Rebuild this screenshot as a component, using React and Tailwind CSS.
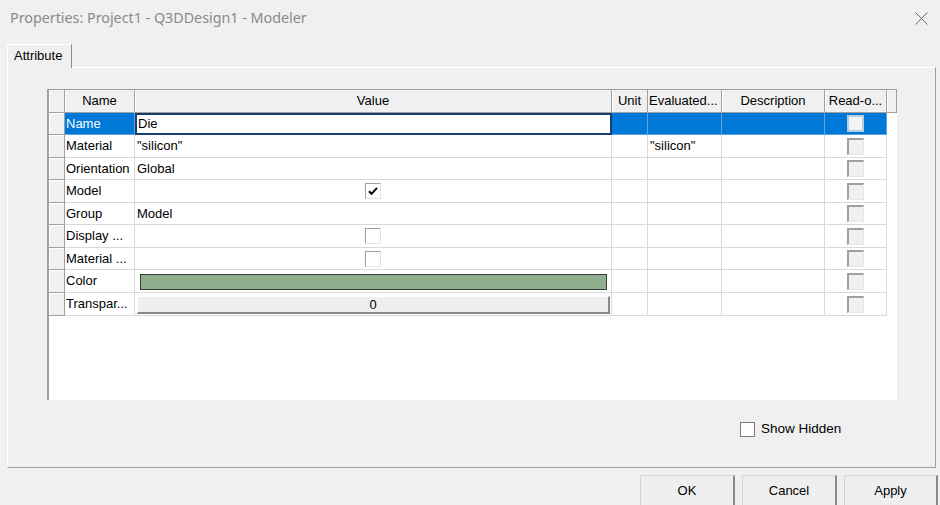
import React from 'react';

// Rejilla de propiedades del objeto "Die" — filas en el orden del diálogo original.
const FILAS = [
  { nombre: 'Name', valor: 'Die', evaluado: '', tipo: 'edit', alto: 'h-[22px]' },
  { nombre: 'Material', valor: '"silicon"', evaluado: '"silicon"', tipo: 'texto', alto: 'h-[23px]' },
  { nombre: 'Orientation', valor: 'Global', evaluado: '', tipo: 'texto', alto: 'h-[22px]' },
  { nombre: 'Model', valor: true, evaluado: '', tipo: 'check', alto: 'h-[23px]' },
  { nombre: 'Group', valor: 'Model', evaluado: '', tipo: 'texto', alto: 'h-[22px]' },
  { nombre: 'Display ...', valor: false, evaluado: '', tipo: 'check', alto: 'h-[23px]' },
  { nombre: 'Material ...', valor: false, evaluado: '', tipo: 'check', alto: 'h-[22px]' },
  { nombre: 'Color', valor: '#8fae8e', evaluado: '', tipo: 'color', alto: 'h-[23px]' },
  { nombre: 'Transpar...', valor: '0', evaluado: '', tipo: 'boton', alto: 'h-[23px]' },
];

const FUENTE = { fontFamily: '"Liberation Sans", Arial, sans-serif' };

function CajaCheck({ marcado }) {
  return (
    <div className="flex h-[16px] w-[16px] items-center justify-center border-t border-l border-[#a0a0a0] border-r border-b border-r-[#e3e3e3] border-b-[#e3e3e3] bg-white">
      {marcado && (
        <svg width="12" height="12" viewBox="0 0 12 12">
          <path d="M2 6.2 L4.6 8.8 L10 2.8" fill="none" stroke="#000" strokeWidth="2" />
        </svg>
      )}
    </div>
  );
}

function CajaSoloLectura({ sel }) {
  return sel ? (
    <div className="h-[17px] w-[17px] border-2 border-[#b9cde2] bg-[#f3f3f3]" />
  ) : (
    <div className="h-[17px] w-[17px] border-t-2 border-l-2 border-[#a0a0a0] border-r border-b border-r-[#e6e6e6] border-b-[#e6e6e6] bg-[#f0f0f0]" />
  );
}

function CeldaValor({ fila }) {
  if (fila.tipo === 'edit') {
    return (
      <div className="flex h-full w-[477px] items-center border-2 border-[#173f6d] bg-white pl-[1px]">
        {fila.valor}
      </div>
    );
  }
  if (fila.tipo === 'check') {
    return (
      <div className="flex h-full w-[477px] items-center justify-center border-r border-b border-[#d9d9d9]">
        <CajaCheck marcado={fila.valor} />
      </div>
    );
  }
  if (fila.tipo === 'color') {
    return (
      <div className="flex h-full w-[477px] border-r border-b border-[#d9d9d9] pt-[4px] pl-[5px] pr-[4px] pb-[2px]">
        <div className="h-[16px] w-full border border-[#3c3c3c] bg-[#8fae8e]" />
      </div>
    );
  }
  if (fila.tipo === 'boton') {
    return (
      <div className="flex h-full w-[477px] border-r border-b border-[#d9d9d9] pt-[3px] pl-[2px] pr-[1px] pb-[1px]">
        <div className="flex h-[18px] w-full items-center justify-center border-t border-l border-white border-r-2 border-b-2 border-r-[#8a8a8a] border-b-[#8a8a8a] bg-[#efefef]">
          {fila.valor}
        </div>
      </div>
    );
  }
  return (
    <div className="flex h-full w-[477px] items-center border-r border-b border-[#d9d9d9] pl-[2px]">
      {fila.valor}
    </div>
  );
}

function Fila({ fila }) {
  const sel = fila.tipo === 'edit';
  const celda = sel
    ? 'bg-[#0078d7] text-white border-r border-b border-[#5fa3e0]'
    : 'border-r border-b border-[#d9d9d9]';
  return (
    <div className={`flex ${fila.alto}`}>
      <div className="h-full w-[16px] border-r border-b border-[#a0a0a0] bg-[#f0f0f0] shadow-[inset_1px_1px_0_#fff]" />
      <div className={`flex h-full w-[70px] items-center whitespace-nowrap pl-[1px] ${celda}`}>{fila.nombre}</div>
      <CeldaValor fila={fila} />
      <div className={`h-full w-[36px] ${celda}`} />
      <div className={`flex h-full w-[74px] items-center pl-[2px] ${celda}`}>{fila.evaluado}</div>
      <div className={`h-full w-[103px] ${celda}`} />
      <div className={`flex h-full w-[62px] items-center justify-center ${celda}`}>
        <CajaSoloLectura sel={sel} />
      </div>
    </div>
  );
}

function Cabecera({ ancho, children }) {
  return (
    <div
      className={`flex h-full ${ancho} items-center justify-center whitespace-nowrap border-r border-[#a0a0a0] bg-[#f0f0f0] shadow-[inset_1px_0_0_#fff]`}
    >
      {children}
    </div>
  );
}

function Boton({ children, ancho }) {
  return (
    <div
      className={`flex h-[32px] ${ancho} items-center justify-center border-t border-l border-[#d4d4d4] border-r-2 border-b-2 border-r-[#8a8a8a] border-b-[#8a8a8a] bg-[#efefef] pt-[1px] text-[13px] text-black`}
    >
      {children}
    </div>
  );
}

export default function App() {
  return (
    <div className="flex h-[505px] w-[940px] flex-col overflow-hidden bg-[#f0f0f0] text-[13px] text-black" style={FUENTE}>
      {/* barra de título */}
      <div className="flex h-[36px] shrink-0 items-center justify-between pl-[10px] pr-[12px]">
        <span className="text-[14.3px] text-[#8a8a8a]" style={{ fontFamily: '"Noto Sans", "Open Sans", sans-serif' }}>
          Properties: Project1 - Q3DDesign1 - Modeler
        </span>
        <svg width="13" height="13" viewBox="0 0 13 13">
          <path d="M0.5 0.5 L12.5 12.5 M12.5 0.5 L0.5 12.5" stroke="#6a6a6a" strokeWidth="1" />
        </svg>
      </div>

      {/* pestaña */}
      <div className="flex shrink-0 pl-[7px] pt-[8px]">
        <div className="relative z-10 -mb-px flex h-[24px] w-[65px] items-center border-t border-l border-white border-r border-r-[#8a8a8a] bg-[#f0f0f0] pl-[6px] pb-[2px]">
          Attribute
        </div>
      </div>

      {/* panel de la pestaña */}
      <div className="ml-[7px] flex h-[401px] w-[929px] shrink-0 flex-col border-t border-l border-white border-r border-b border-r-[#a0a0a0] border-b-[#a0a0a0] pl-[39px] pt-[21px]">
        <div className="flex h-[311px] w-[850px] flex-col border-t border-l-2 border-[#a0a0a0] bg-white">
          <div className="flex h-[23px] shrink-0 border-b border-[#a0a0a0]">
            <Cabecera ancho="w-[16px]" />
            <Cabecera ancho="w-[70px]">Name</Cabecera>
            <Cabecera ancho="w-[477px]">Value</Cabecera>
            <Cabecera ancho="w-[36px]">Unit</Cabecera>
            <div className="flex h-full w-[74px] items-center whitespace-nowrap border-r border-[#a0a0a0] bg-[#f0f0f0] pl-[1px]">
              Evaluated...
            </div>
            <Cabecera ancho="w-[103px]">Description</Cabecera>
            <Cabecera ancho="w-[62px]">Read-o...</Cabecera>
            <Cabecera ancho="w-[10px]" />
          </div>
          {FILAS.map((fila) => (
            <Fila key={fila.nombre} fila={fila} />
          ))}
        </div>

        <div className="ml-[693px] mt-[19px] flex items-center gap-[6px]">
          <div className="h-[15px] w-[15px] border border-[#7a7a7a] bg-white" />
          <span className="text-[13.5px]">Show Hidden</span>
        </div>
      </div>

      {/* botones */}
      <div className="mt-[7px] flex justify-end gap-[7px] pr-[2px]">
        <Boton ancho="w-[95px]">OK</Boton>
        <Boton ancho="w-[95px]">Cancel</Boton>
        <Boton ancho="w-[94px]">Apply</Boton>
      </div>
    </div>
  );
}
